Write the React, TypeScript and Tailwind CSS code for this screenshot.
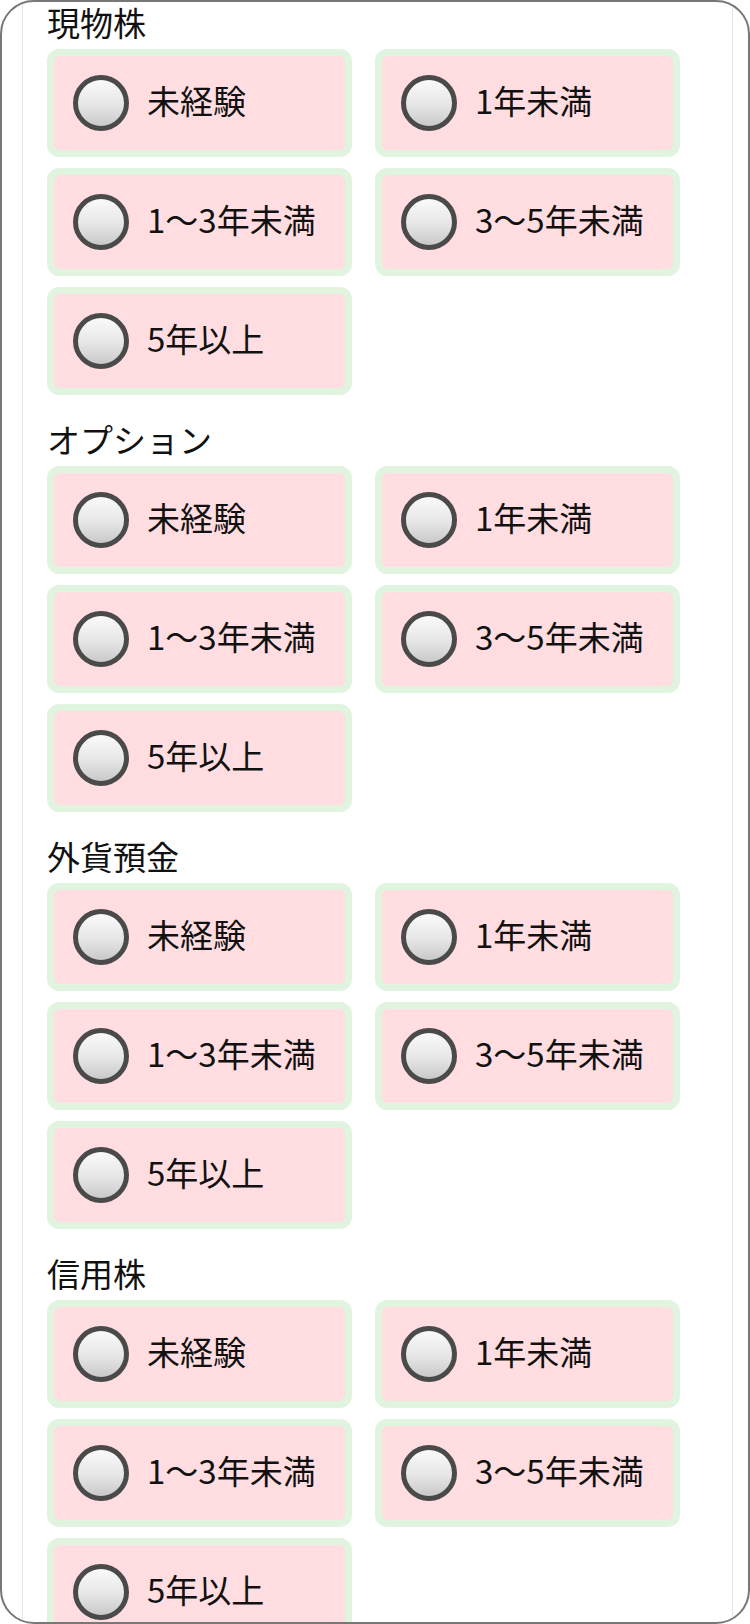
const sections = ['現物株', 'オプション', '外貨預金', '信用株'];

const options = ['未経験', '1年未満', '1〜3年未満', '3〜5年未満', '5年以上'];

function RadioCard({ label }: { label: string }) {
  return (
    <label className="block h-[108px] rounded-[12px] border-[7px] border-[#e0f4e0] bg-[#e0f4e0]">
      <div className="flex h-full items-center rounded-[6px] bg-[#ffdde0] pl-[19px]">
        <span className="h-[56px] w-[56px] shrink-0 rounded-full border-[5px] border-[#4a4a4a] bg-[linear-gradient(180deg,#fafafa_0%,#e6e6e6_55%,#c9c9c9_100%)]" />
        <span className="ml-[18px] pb-[5px] text-[33px] leading-none text-[#111]">{label}</span>
      </div>
    </label>
  );
}

export default function App() {
  return (
    <div
      className="box-border h-[1624px] w-[750px] overflow-hidden rounded-[34px] border-2 border-[#777] bg-white"
      style={{ fontFamily: '"Noto Sans CJK JP", "Noto Sans", sans-serif' }}
    >
      <div className="ml-[20px] mr-[15px] h-full border-x border-[#f0e2da] pl-[24px]">
        {sections.map((title) => (
          <div key={title} className="mb-[24px]">
            <h2 className="mb-[7px] h-[40px] text-[33px] leading-[40px] font-normal text-[#111]">
              {title}
            </h2>

            <div className="grid w-[633px] grid-cols-[305px_305px] gap-x-[23px] gap-y-[11px]">
              {options.map((opt) => (
                <RadioCard key={opt} label={opt} />
              ))}
            </div>
          </div>
        ))}
      </div>
    </div>
  );
}
